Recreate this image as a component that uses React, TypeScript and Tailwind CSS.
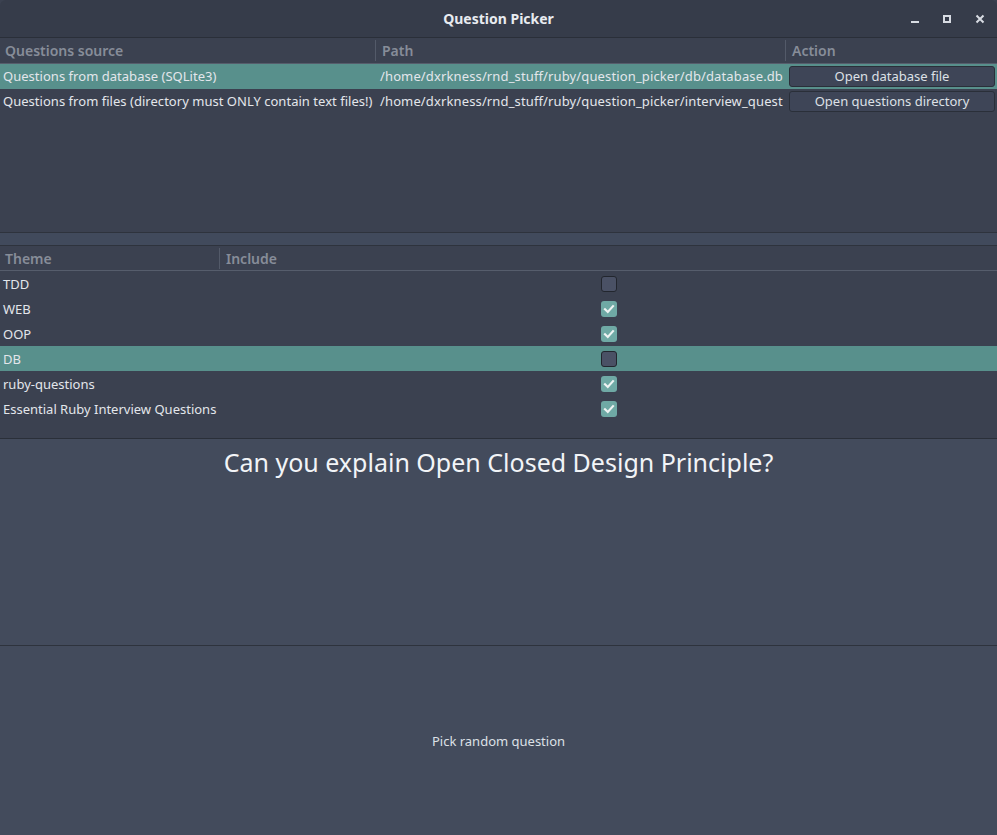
import React from "react";

const sources = [
  {
    name: "Questions from database (SQLite3)",
    path: "/home/dxrkness/rnd_stuff/ruby/question_picker/db/database.db",
    action: "Open database file",
    selected: true,
  },
  {
    name: "Questions from files (directory must ONLY contain text files!)",
    path: "/home/dxrkness/rnd_stuff/ruby/question_picker/interview_quest",
    action: "Open questions directory",
    selected: false,
  },
];

const themes = [
  { name: "TDD", on: false, selected: false },
  { name: "WEB", on: true, selected: false },
  { name: "OOP", on: true, selected: false },
  { name: "DB", on: false, selected: true },
  { name: "ruby-questions", on: true, selected: false },
  { name: "Essential Ruby Interview Questions", on: true, selected: false },
];

function Checkbox({ on }: { on: boolean }) {
  if (!on) {
    return <div className="h-[16px] w-[16px] rounded-[3px] border border-[#22262e] bg-[#4a5165]" />;
  }
  return (
    <div className="flex h-[16px] w-[16px] items-center justify-center rounded-[3px] bg-[#6fa9a5]">
      <svg width="12" height="12" viewBox="0 0 12 12">
        <path d="M2 6.2 L4.8 9 L10 3.2" fill="none" stroke="#eef3f3" strokeWidth="2.2" strokeLinecap="square" />
      </svg>
    </div>
  );
}

export default function App() {
  return (
    <div
      className="flex h-[835px] w-[997px] flex-col overflow-hidden bg-[#3b4150] text-[13px] text-[#e3e6eb]"
      style={{ fontFamily: '"Noto Sans", "DejaVu Sans", sans-serif' }}
    >
      {/* title bar */}
      <div className="relative flex h-[38px] shrink-0 items-center justify-center rounded-t-[6px] border-b border-[#2a2f39] bg-[#363c4a]">
        <span className="text-[14px] font-bold text-[#e8ebf0]">Question Picker</span>
        <div className="absolute right-[12px] top-0 flex h-full items-center gap-[24px] text-[#d8dce3]">
          <div className="mt-[6px] h-[2px] w-[8px] bg-[#d8dce3]" />
          <div className="h-[8px] w-[8px] border-2 border-[#d8dce3]" />
          <svg width="10" height="10" viewBox="0 0 10 10">
            <path d="M1.5 1.5 L8.5 8.5 M8.5 1.5 L1.5 8.5" stroke="#d8dce3" strokeWidth="2" />
          </svg>
        </div>
      </div>

      {/* sources table */}
      <div className="h-[194px] shrink-0 bg-[#3b4150]">
        <div className="flex h-[26px] items-center border-b border-[#565d6c] text-[14px] font-semibold text-[#878d99]">
          <div className="w-[376px] border-r border-[#535a69] pl-[5px]">Questions source</div>
          <div className="w-[410px] border-r border-[#535a69] pl-[6px]">Path</div>
          <div className="flex-1 pl-[6px]">Action</div>
        </div>
        {sources.map((s) => (
          <div
            key={s.name}
            className={`flex h-[25px] items-center whitespace-nowrap ${s.selected ? "bg-[#58908c]" : ""}`}
          >
            <div className="w-[376px] overflow-hidden pl-[3px] tracking-[0.03px]">{s.name}</div>
            <div className="w-[410px] overflow-hidden pl-[4px] tracking-[0.13px]">{s.path}</div>
            <div className="flex-1 pl-[3px] pr-[2px]">
              <div className="flex h-[21px] items-center justify-center rounded-[3px] border border-[#2a2f39] bg-[#3e4557] text-[#dde0e6]">
                {s.action}
              </div>
            </div>
          </div>
        ))}
      </div>

      {/* splitter */}
      <div className="h-[14px] shrink-0 border-y border-[#2e333d] bg-[#414a5c]" />

      {/* themes table */}
      <div className="h-[192px] shrink-0 bg-[#3b4150]">
        <div className="flex h-[25px] items-center border-b border-[#565d6c] text-[14px] font-semibold text-[#878d99]">
          <div className="w-[220px] border-r border-[#535a69] pl-[5px]">Theme</div>
          <div className="flex-1 pl-[6px]">Include</div>
        </div>
        {themes.map((t) => (
          <div key={t.name} className={`flex h-[25px] items-center ${t.selected ? "bg-[#58908c]" : ""}`}>
            <div className="w-[601px] pl-[3px] pt-[2px]">{t.name}</div>
            <Checkbox on={t.on} />
          </div>
        ))}
      </div>

      {/* question */}
      <div className="h-[207px] shrink-0 border-t border-[#2a2f39] bg-[#434b5c] pt-[5px] text-center text-[25px] text-[#f2f4f7]">
        Can you explain Open Closed Design Principle?
      </div>

      {/* pick button */}
      <div className="flex flex-1 items-center justify-center border-t border-[#2e333d] bg-[#434b5c] pt-[2px] text-[13px] text-[#dde0e6]">
        Pick random question
      </div>
    </div>
  );
}
